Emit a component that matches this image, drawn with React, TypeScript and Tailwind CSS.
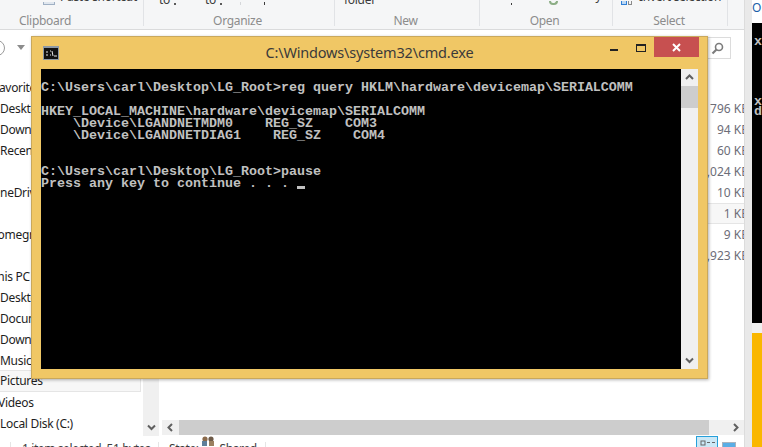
const consoleText = `
C:\\Users\\carl\\Desktop\\LG_Root>reg query HKLM\\hardware\\devicemap\\SERIALCOMM

HKEY_LOCAL_MACHINE\\hardware\\devicemap\\SERIALCOMM
    \\Device\\LGANDNETMDM0    REG_SZ    COM3
    \\Device\\LGANDNETDIAG1    REG_SZ    COM4


C:\\Users\\carl\\Desktop\\LG_Root>pause
Press any key to continue . . . `;

const sidebarRows = [
  { label: "Favorites", indent: "ml-[-7px]" },
  { label: "Desktop", indent: "ml-0" },
  { label: "Downloads", indent: "ml-0" },
  { label: "Recent places", indent: "ml-0" },
  { label: "", indent: "ml-0" },
  { label: "OneDrive", indent: "ml-[-9px]" },
  { label: "", indent: "ml-0" },
  { label: "Homegroup", indent: "ml-[-11px]" },
  { label: "", indent: "ml-0" },
  { label: "This PC", indent: "ml-[-9px]" },
  { label: "Desktop", indent: "ml-0" },
  { label: "Documents", indent: "ml-0" },
  { label: "Downloads", indent: "ml-0" },
  { label: "Music", indent: "ml-0" },
  { label: "Pictures", indent: "ml-0", active: true },
  { label: "Videos", indent: "ml-[-2px]" },
  { label: "Local Disk (C:)", indent: "ml-0" },
];

const sizes = ["796 KB", "94 KB", "60 KB", "1,024 KB", "10 KB", "1 KB", "9 KB", "1,923 KB"];

function Chevron({ dir }: { dir: "up" | "down" | "left" | "right" }) {
  const points = {
    up: "1,6 4.5,2.5 8,6",
    down: "1,2.5 4.5,6 8,2.5",
    left: "6,1 2.5,4.5 6,8",
    right: "3,1 6.5,4.5 3,8",
  }[dir];
  return (
    <svg width="9" height="9" viewBox="0 0 9 9">
      <polyline points={points} fill="none" stroke="#606060" strokeWidth="2" />
    </svg>
  );
}

function RibbonGroup({
  label,
  width,
  labelPad,
  children,
}: {
  label: string;
  width: string;
  labelPad: string;
  children?: React.ReactNode;
}) {
  return (
    <div className={`flex h-full shrink-0 flex-col border-r border-[#e1e3e6] ${width}`}>
      <div className="flex h-[5px] shrink-0 items-end overflow-hidden whitespace-nowrap tracking-[-0.3px] text-[#3c3c3c]">
        {children}
      </div>
      <div className={`mt-px shrink-0 pt-[6px] text-center text-[12px] leading-[18px] tracking-[-0.3px] text-[#8c8c8c] ${labelPad}`}>
        {label}
      </div>
    </div>
  );
}

function CmdWindow() {
  return (
    <div className="absolute left-[31px] top-[36px] flex h-[343px] w-[677px] flex-col border border-[#c9a85c] bg-[#f0c765] shadow-[1px_1px_3px_rgba(0,0,0,0.3)]">
      <div className="relative flex h-[32px] shrink-0 items-center justify-center pb-[3px]">
        <svg className="absolute left-[11px] top-[9px]" width="16" height="14" viewBox="0 0 16 14">
          <rect x="0" y="0" width="16" height="14" fill="#8d99a5" />
          <rect x="1" y="2" width="14" height="11" fill="#111" />
          <path d="M3 6h2M3 9h2M7 5h1M7 9h1M9 5l1 5M11 10h3" stroke="#e6e6e6" strokeWidth="1" />
        </svg>
        <span className="text-[14.5px] leading-[20px] tracking-[-0.18px] text-[#3a3a3a]">
          C:\Windows\system32\cmd.exe
        </span>
        <span className="absolute left-[578px] top-[12px] h-[2px] w-[8px] bg-[#222]" />
        <span className="absolute left-[604px] top-[7px] h-[8px] w-[10px] border border-t-2 border-[#222]" />
        <span className="absolute right-[8px] top-0 flex h-[20px] w-[45px] items-center justify-center bg-[#c75050]">
          <svg width="9" height="9" viewBox="0 0 9 9">
            <path d="M1 1l7 7M8 1l-7 7" stroke="#fff" strokeWidth="2" />
          </svg>
        </span>
      </div>
      <div className="flex h-[300px] px-[9px]">
        <div className="relative h-full flex-1 overflow-hidden bg-black pt-px">
          <pre className="m-0 font-['Liberation_Mono',monospace] text-[13.33px] font-bold leading-[12px] text-[#c0c0c0]">
            {consoleText}
          </pre>
          <span className="absolute left-[256px] top-[117px] h-[3px] w-[8px] bg-[#c0c0c0]" />
        </div>
        <div className="flex h-full w-[17px] flex-col items-center bg-[#f0f0f0]">
          <div className="flex h-[17px] items-center justify-center">
            <Chevron dir="up" />
          </div>
          <div className="h-[22px] w-full bg-[#cdcdcd]" />
          <div className="mt-auto flex h-[17px] items-center justify-center">
            <Chevron dir="down" />
          </div>
        </div>
      </div>
    </div>
  );
}

export default function App() {
  return (
    <div className="relative flex h-[447px] w-[762px] overflow-hidden bg-white font-['Noto_Sans',sans-serif]">
      <div className="flex h-full w-[744px] shrink-0 flex-col">
        {/* ribbon, scrolled so only the group labels show */}
        <div className="flex h-[30px] shrink-0 border-b border-[#dadbdc] bg-[#f5f6f7] pb-[3px] text-[12px]">
          <RibbonGroup label="Clipboard" width="w-[144px]" labelPad="pr-[53px]">
            <span className="ml-[43px] h-[3px] w-[12px] border border-t-0 border-[#9fb0c4] bg-[#dfe6ee]" />
            <span className="ml-[5px] leading-[16px]">Paste shortcut</span>
          </RibbonGroup>
          <RibbonGroup label="Organize" width="w-[191px]" labelPad="pr-[3px]">
            <span className="ml-[15px] leading-[10px]">to</span>
            <span className="ml-[4px] h-[2px] w-[2px] bg-[#5a5a5a]" />
            <span className="ml-[29px] leading-[10px]">to</span>
            <span className="ml-[4px] h-[2px] w-[2px] bg-[#5a5a5a]" />
            <span className="ml-[18px] h-[3px] w-px bg-[#d5d7da]" />
            <span className="ml-[23px] h-[3px] w-px bg-[#3c3c3c]" />
          </RibbonGroup>
          <RibbonGroup label="New" width="w-[145px]" labelPad="pr-[3px]">
            <span className="ml-[9px] leading-[10px]">folder</span>
          </RibbonGroup>
          <RibbonGroup label="Open" width="w-[133px]" labelPad="pr-[3px]">
            <span className="ml-[31px] h-[2px] w-px bg-[#3c3c3c]" />
            <span className="ml-[37px] h-[4px] w-[9px] rounded-b-full border-2 border-t-0 border-[#8cae86]" />
            <span className="ml-[5px] leading-[18px]">History</span>
          </RibbonGroup>
          <RibbonGroup label="Select" width="w-[115px]" labelPad="pr-[2px]">
            <span className="ml-[8px] h-[4px] w-[6px] border-x border-b border-[#2f7fd6] bg-[#bcd8f4]" />
            <span className="ml-[1px] h-[4px] w-[4px] border-x border-b border-[#8a8a8a]" />
            <span className="ml-[7px] leading-[16px]">Invert selection</span>
          </RibbonGroup>
        </div>

        {/* address row */}
        <div className="relative flex h-[47px] shrink-0 items-start">
          <span className="ml-[-11px] mt-[10px] flex h-[16px] w-[16px] items-center justify-center rounded-full border border-[#9a9a9a]">
            <span className="h-[2px] w-[2px] bg-[#9a9a9a]" />
          </span>
          <svg className="ml-[12px] mt-[15px]" width="8" height="5" viewBox="0 0 8 5">
            <polygon points="0,0 8,0 4,5" fill="#8c8c8c" />
          </svg>
          <div className="ml-auto mr-[13px] mt-[7px] flex h-[22px] w-[60px] items-center justify-end border border-[#dcdcdc] pr-[6px]">
            <svg width="13" height="13" viewBox="0 0 13 13">
              <circle cx="8" cy="5" r="3.5" fill="none" stroke="#7c7c7c" strokeWidth="1.6" />
              <path d="M5.5 7.5L1.5 11.5" stroke="#7c7c7c" strokeWidth="2.2" />
            </svg>
          </div>
        </div>

        <div className="flex h-[359px] shrink-0">
          <div className="h-full w-[143px] shrink-0 overflow-hidden text-[12px] tracking-[-0.3px] text-[#1e1e1e]">
            {sidebarRows.map((row, i) => (
              <div
                key={i}
                className={`flex items-center whitespace-nowrap ${
                  row.active ? "mr-[2px] mt-[-1px] h-[22px] border-y border-r border-[#e5e5e5] bg-[#f7f7f7]" : "h-[21px]"
                }`}
              >
                <span className={row.indent}>{row.label}</span>
              </div>
            ))}
          </div>
          <div className="flex h-full w-[16px] shrink-0 flex-col items-center justify-end bg-[#f0f0f0] pb-[4px]">
            <Chevron dir="down" />
          </div>
          <div className="ml-[3px] flex h-full flex-1 flex-col overflow-hidden">
            <div className="flex-1 overflow-hidden pt-[21px] text-[12px] text-[#6d6d78]">
              {sizes.map((size, i) => (
                <div
                  key={i}
                  className={`flex h-[21px] items-center justify-end whitespace-nowrap ${
                    size === "1 KB" ? "border-y border-[#e5e5e5] bg-[#f7f7f7]" : ""
                  }`}
                >
                  <span className="mr-[-5px]">{size}</span>
                </div>
              ))}
            </div>
            <div className="mb-px flex h-[15px] shrink-0 bg-[#f0f0f0]">
              <div className="flex w-[17px] items-center justify-center">
                <Chevron dir="left" />
              </div>
              <div className="w-[530px] bg-[#cdcdcd]" />
              <div className="flex flex-1 items-center justify-end pr-[4px]">
                <Chevron dir="right" />
              </div>
            </div>
          </div>
        </div>

        {/* status bar, cut off by the bottom of the shot */}
        <div className="flex h-[11px] shrink-0 overflow-hidden text-[12px] tracking-[-0.4px] text-[#3c3c3c]">
          <div className="ml-[10px] mt-[6px] flex h-[5px] w-[149px] border-x border-[#e5e5e5] pl-[11px]">
            <span className="mt-[-2px] whitespace-nowrap leading-[18px]">1 item selected&nbsp; 51 bytes</span>
          </div>
          <div className="mt-[6px] flex h-[5px] w-[107px] border-r border-[#e5e5e5] pl-[10px]">
            <span className="mt-[-2px] whitespace-nowrap leading-[18px]">State:</span>
            <svg className="ml-[2px] mt-[-6px] shrink-0" width="14" height="10" viewBox="0 0 14 10">
              <circle cx="4" cy="3" r="2.6" fill="#8a6a4a" />
              <circle cx="10" cy="3" r="2.6" fill="#6d5a48" />
              <rect x="1" y="5" width="5" height="5" fill="#5f7f9a" />
              <rect x="8" y="5" width="5" height="5" fill="#9a8060" />
            </svg>
            <span className="ml-[5px] mt-[-2px] leading-[18px]">Shared</span>
          </div>
          <div className="ml-auto mr-[26px] h-full w-[22px] border border-b-0 border-[#26a0da] bg-[#cbe8f6]">
            <svg width="20" height="10" viewBox="0 0 20 10">
              <rect x="4" y="4" width="4" height="4" fill="none" stroke="#666" />
              <path d="M10 5.5h3M15 5.5h3" stroke="#666" />
            </svg>
          </div>
          <div className="absolute left-[722px] top-[442px] h-[5px] w-[14px] border border-b-0 border-[#a9b4bf] bg-[#5aaee6]" />
        </div>
      </div>

      <div className="h-full w-[8px] shrink-0 border-l border-[#dcdcdc] bg-[#e9e9e9]" />

      {/* window behind, on the right edge */}
      <div className="flex h-full flex-1 flex-col overflow-hidden">
        <div className="h-[23px] bg-white pt-px text-[12px] leading-[14px] text-[#1a5ea8]">O</div>
        <div className="h-[300px] bg-black pl-[2px] font-['Liberation_Mono',monospace] text-[13.33px] font-bold leading-[12px] text-[#c0c0c0]">
          <div className="pt-[13px]">x</div>
          <div className="pt-[48px]">x</div>
          <div className="mt-[-2px]">d</div>
        </div>
        <div className="h-[10px] bg-[#f0f0f0]" />
        <div className="flex-1 bg-[#fab700]" />
      </div>

      <CmdWindow />
    </div>
  );
}
